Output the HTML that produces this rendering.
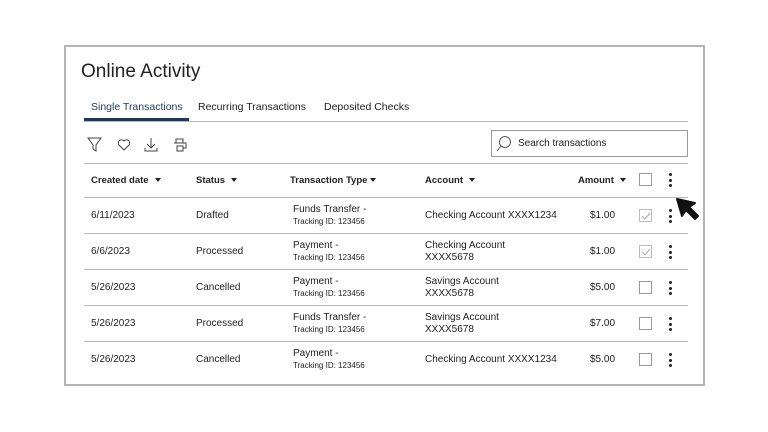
<!DOCTYPE html>
<html><head><style>
*{margin:0;padding:0;box-sizing:border-box}
body{width:768px;height:432px;background:#fff;font-family:"Liberation Sans",sans-serif;color:#222;position:relative;overflow:hidden}
.a{position:absolute;white-space:nowrap}
.box{left:64px;top:45px;width:641px;height:341px;border:2px solid #b4b4b4}
.hl{position:absolute;left:84px;width:604px;height:1px;background:#b8b8b8}
.t{font-size:10px}
.h{font-size:9.5px;font-weight:bold}
.s{font-size:8px}
.cb{position:absolute;width:13px;height:13px;border:1px solid #999;background:#fff}
.dots{position:absolute;width:3px}
.dots i{display:block;width:3px;height:3px;border-radius:50%;background:#222;margin-bottom:2.5px}
.tri{display:inline-block;width:0;height:0;border-left:3px solid transparent;border-right:3px solid transparent;border-top:4px solid #222;margin-left:6px;vertical-align:1px}
</style></head><body>
<div class="a box"></div>
<div class="a" style="left:81px;top:61px;font-size:19px;color:#222">Online Activity</div>
<div class="a" style="left:91px;top:101px;font-size:10.5px;color:#1e3a5a">Single Transactions</div>
<div class="a" style="left:198px;top:101px;font-size:10.5px">Recurring Transactions</div>
<div class="a" style="left:324px;top:101px;font-size:10.5px">Deposited Checks</div>
<div class="hl" style="top:121px"></div>
<div class="a" style="left:84px;top:118px;width:105px;height:3px;background:#1e3a5a"></div>
<svg class="a" style="left:86px;top:137px" width="110" height="16" fill="none" stroke="#444" stroke-width="1">
<path d="M2 1h13l-5 7v6l-3-2V8z"/>
<path d="M38 13l-5-5a3 3 0 0 1 5-4a3 3 0 0 1 5 4z"/>
<path d="M65 1v10M61 7l4 4 4-4M59 11v3h12v-3"/>
<path d="M90 6V2h7v4M88 6h12v5h-3M91 9h6v5h-6z"/>
</svg>
<div class="a" style="left:491px;top:130px;width:197px;height:27px;border:1px solid #999"></div>
<svg class="a" style="left:496px;top:135px" width="18" height="18" fill="none" stroke="#555" stroke-width="1"><circle cx="9" cy="7" r="5.5"/><path d="M5 11l-4 5"/></svg>
<div class="a t" style="left:518px;top:138px">Search transactions</div>
<div class="hl" style="top:163px"></div>
<div class="a h" style="left:91px;top:175px">Created date<span class="tri"></span></div>
<div class="a h" style="left:196px;top:175px">Status<span class="tri"></span></div>
<div class="a h" style="left:290px;top:175px">Transaction Type<span class="tri" style="margin-left:3px"></span></div>
<div class="a h" style="left:425px;top:175px">Account<span class="tri"></span></div>
<div class="a h" style="left:578px;top:175px">Amount<span class="tri"></span></div>
<div class="cb" style="left:639px;top:173px"></div>
<div class="dots a" style="left:669px;top:173px"><i></i><i></i><i></i></div>
<div class="hl" style="top:197px"></div>
<div class="hl" style="top:233px"></div>
<div class="hl" style="top:269px"></div>
<div class="hl" style="top:305px"></div>
<div class="hl" style="top:341px"></div>

<div class="a t" style="left:91px;top:210px">6/11/2023</div>
<div class="a t" style="left:196px;top:210px">Drafted</div>
<div class="a t" style="left:293px;top:204px">Funds Transfer -</div><div class="a s" style="left:293px;top:217px">Tracking ID: 123456</div>
<div class="a t" style="left:425px;top:210px">Checking Account XXXX1234</div>
<div class="a t" style="left:590px;top:210px">$1.00</div>

<div class="a t" style="left:91px;top:246px">6/6/2023</div>
<div class="a t" style="left:196px;top:246px">Processed</div>
<div class="a t" style="left:293px;top:240px">Payment -</div><div class="a s" style="left:293px;top:253px">Tracking ID: 123456</div>
<div class="a t" style="left:425px;top:240px">Checking Account</div><div class="a t" style="left:425px;top:252px">XXXX5678</div>
<div class="a t" style="left:590px;top:246px">$1.00</div>

<div class="a t" style="left:91px;top:282px">5/26/2023</div>
<div class="a t" style="left:196px;top:282px">Cancelled</div>
<div class="a t" style="left:293px;top:276px">Payment -</div><div class="a s" style="left:293px;top:289px">Tracking ID: 123456</div>
<div class="a t" style="left:425px;top:276px">Savings Account</div><div class="a t" style="left:425px;top:288px">XXXX5678</div>
<div class="a t" style="left:590px;top:282px">$5.00</div>

<div class="a t" style="left:91px;top:318px">5/26/2023</div>
<div class="a t" style="left:196px;top:318px">Processed</div>
<div class="a t" style="left:293px;top:312px">Funds Transfer -</div><div class="a s" style="left:293px;top:325px">Tracking ID: 123456</div>
<div class="a t" style="left:425px;top:312px">Savings Account</div><div class="a t" style="left:425px;top:324px">XXXX5678</div>
<div class="a t" style="left:590px;top:318px">$7.00</div>

<div class="a t" style="left:91px;top:354px">5/26/2023</div>
<div class="a t" style="left:196px;top:354px">Cancelled</div>
<div class="a t" style="left:293px;top:348px">Payment -</div><div class="a s" style="left:293px;top:361px">Tracking ID: 123456</div>
<div class="a t" style="left:425px;top:354px">Checking Account XXXX1234</div>
<div class="a t" style="left:590px;top:354px">$5.00</div>

<div class="cb" style="left:639px;top:209px;border-color:#bbb"></div>
<svg class="a" style="left:641px;top:211px" width="10" height="10"><path d="M1 5l3 3 5-6" fill="none" stroke="#aaa"/></svg>
<div class="cb" style="left:639px;top:245px;border-color:#bbb"></div>
<svg class="a" style="left:641px;top:247px" width="10" height="10"><path d="M1 5l3 3 5-6" fill="none" stroke="#aaa"/></svg>
<div class="cb" style="left:639px;top:281px"></div>
<div class="cb" style="left:639px;top:317px"></div>
<div class="cb" style="left:639px;top:353px"></div>
<div class="dots a" style="left:669px;top:209px"><i></i><i></i><i></i></div>
<div class="dots a" style="left:669px;top:245px"><i></i><i></i><i></i></div>
<div class="dots a" style="left:669px;top:281px"><i></i><i></i><i></i></div>
<div class="dots a" style="left:669px;top:317px"><i></i><i></i><i></i></div>
<div class="dots a" style="left:669px;top:353px"><i></i><i></i><i></i></div>

<svg class="a" style="left:674px;top:196px" width="32" height="30"><path d="M3 3l5 17 4-6 9 9 3-3-9-9 6-4z" fill="#111" stroke="#111" stroke-width="2" stroke-linejoin="round"/></svg>
</body></html>
